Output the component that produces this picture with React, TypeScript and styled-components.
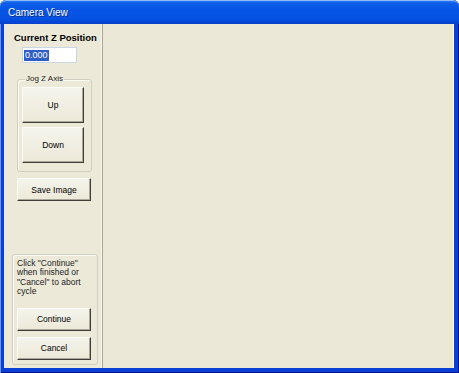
import React from "react";
import styled, { createGlobalStyle } from "styled-components";

const Global = createGlobalStyle`
  html, body { margin: 0; padding: 0; background: #ffffff; }
  body { font-family: "Liberation Sans", Arial, sans-serif; }
`;

const Window = styled.div`
  width: 459px;
  height: 373px;
  box-sizing: border-box;
  display: flex;
  flex-direction: column;
  background: #0a3fd6;
  border-radius: 6px 6px 0 0;
  padding: 0 5px 5px 4px;
  box-shadow: inset 1px 0 0 #6f9af0, inset -1px 0 0 #00138c, inset 0 -1px 0 #00138c;
  overflow: hidden;
`;

const TitleBar = styled.div`
  height: 24px;
  margin: 0 -5px 0 -4px;
  padding-left: 8px;
  display: flex;
  align-items: center;
  color: #ffffff;
  font-size: 10px;
  background: linear-gradient(
    to bottom,
    #3a8cf5 0px,
    #0d5ee8 3px,
    #0655e6 10px,
    #0652e2 18px,
    #0544d2 23px,
    #0b3fc8 24px
  );
  border-radius: 6px 6px 0 0;
  box-shadow: inset 0 1px 0 #8fbcff;
  text-shadow: 1px 1px 0 #0a2c8c;
`;

const Client = styled.div`
  flex: 1;
  display: flex;
  background: #ece9d8;
  min-height: 0;
`;

const LeftPanel = styled.div`
  width: 97px;
  display: flex;
  flex-direction: column;
  border-right: 1px solid #f7f6ef;
  box-shadow: 1px 0 0 #a7a595;
  margin-right: 1px;
  padding-bottom: 3px;
`;

const Canvas = styled.div`
  flex: 1;
  background: #ebe8d7;
  border-right: 1px solid #f9f8f2;
`;

const Heading = styled.div`
  margin-top: 7px;
  padding-left: 10px;
  font-size: 9.5px;
  font-weight: bold;
  color: #000;
  height: 13px;
  line-height: 13px;
  white-space: nowrap;
`;

const Field = styled.div`
  margin: 3px 0 0 18px;
  width: 55px;
  height: 16px;
  box-sizing: border-box;
  background: #fff;
  border: 1px solid #c9d6e3;
  display: flex;
  align-items: center;
  padding-left: 1px;
`;

const Selected = styled.span`
  background: #2f5fc4;
  color: #fff;
  font-size: 9px;
  line-height: 11px;
  padding: 0 1px;
`;

const Group = styled.fieldset<{ $ml: number; $w: number; $h: number; $mt?: number; $auto?: boolean }>`
  margin: ${(p) => (p.$auto ? "auto" : `${p.$mt ?? 0}px`)} 0 0 ${(p) => p.$ml}px;
  width: ${(p) => p.$w}px;
  height: ${(p) => p.$h}px;
  box-sizing: border-box;
  border: 1px solid #d0cfc2;
  border-radius: 3px;
  box-shadow: inset 1px 1px 0 #fbfbf6;
  padding: 0 0 0 4px;
  display: flex;
  flex-direction: column;
  min-width: 0;
`;

const Legend = styled.legend`
  font-size: 8px;
  color: #1a1a1a;
  padding: 0 1px;
  margin-left: 3px;
  line-height: 8px;
`;

const Button = styled.button<{ $w: number; $h: number; $mt: number }>`
  width: ${(p) => p.$w}px;
  height: ${(p) => p.$h}px;
  margin-top: ${(p) => p.$mt}px;
  box-sizing: border-box;
  background: linear-gradient(to bottom, #f5f4ec, #ece9d8);
  border: 1px solid;
  border-color: #fbfbf7 #3f3d36 #3f3d36 #fbfbf7;
  box-shadow: inset -1px -1px 0 #aca899;
  font-family: "Liberation Sans", Arial, sans-serif;
  font-size: 8.5px;
  font-weight: normal;
  color: #000;
  padding: 0;
  display: flex;
  align-items: center;
  justify-content: center;
  flex-shrink: 0;
`;

const SaveButton = styled(Button)`
  margin-left: 13px;
`;

const Note = styled.div`
  margin-top: 4px;
  font-size: 8.5px;
  line-height: 9.4px;
  color: #222;
  width: 76px;
`;

export default function App() {
  return (
    <>
      <Global />
      <Window>
        <TitleBar>Camera View</TitleBar>
        <Client>
          <LeftPanel>
            <Heading>Current Z Position</Heading>
            <Field>
              <Selected>0.000</Selected>
            </Field>
            <Group $ml={13} $w={75} $h={97} $mt={12}>
              <Legend>Jog Z Axis</Legend>
              <Button $w={62} $h={36} $mt={4}>Up</Button>
              <Button $w={62} $h={36} $mt={4}>Down</Button>
            </Group>
            <SaveButton $w={74} $h={23} $mt={6}>Save Image</SaveButton>
            <Group $ml={8} $w={86} $h={111} $auto>
              <Note>
                Click "Continue" when finished or "Cancel" to abort cycle
              </Note>
              <Button $w={74} $h={23} $mt={11}>Continue</Button>
              <Button $w={74} $h={23} $mt={6}>Cancel</Button>
            </Group>
          </LeftPanel>
          <Canvas />
        </Client>
      </Window>
    </>
  );
}
